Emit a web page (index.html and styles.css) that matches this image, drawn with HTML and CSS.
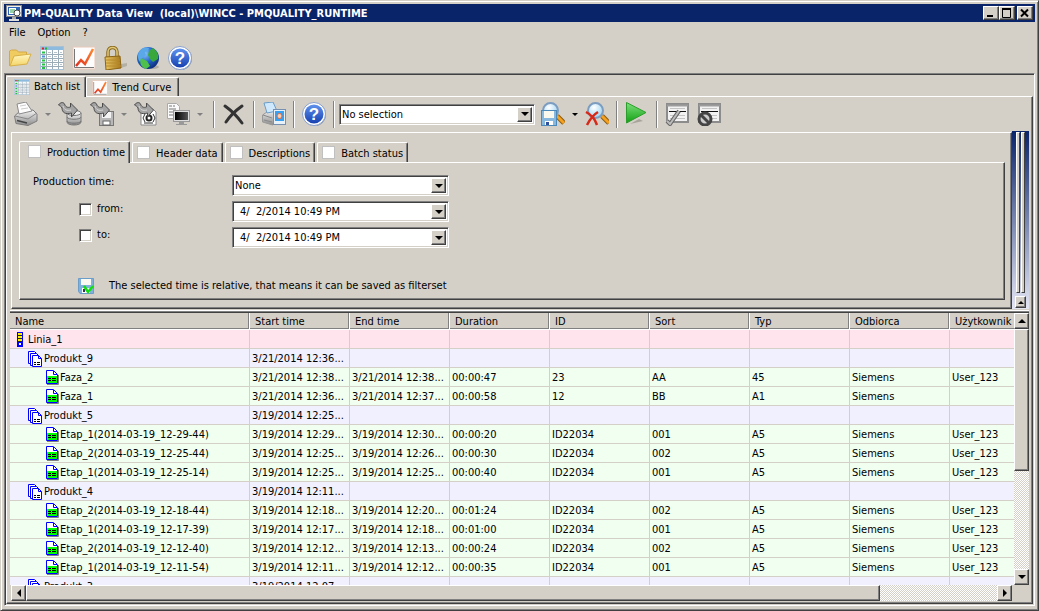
FILE: index.html
```
<!DOCTYPE html>
<html lang="en">
<head>
  <meta charset="UTF-8" />
  <meta name="viewport" content="width=device-width, initial-scale=1.0"/>
  <title>PM-QUALITY Data View</title>
  <link rel="stylesheet" href="styles.css">
</head>
<body>

<!-- shared icons -->
<svg class="defs" aria-hidden="true">
  <defs>
    <linearGradient id="gBlue" x1="0" y1="0" x2="0" y2="1"><stop offset="0" stop-color="#5f93ee"/><stop offset="1" stop-color="#1740b0"/></linearGradient>
    <linearGradient id="gFolder" x1="0" y1="0" x2="0" y2="1"><stop offset="0" stop-color="#fff6c0"/><stop offset="1" stop-color="#f3d468"/></linearGradient>
    <linearGradient id="gGold" x1="0" y1="0" x2="1" y2="0"><stop offset="0" stop-color="#e9c766"/><stop offset="1" stop-color="#a67719"/></linearGradient>
    <linearGradient id="gGrey" x1="0" y1="0" x2="0" y2="1"><stop offset="0" stop-color="#f4f4f4"/><stop offset="1" stop-color="#8c8c8c"/></linearGradient>
    <linearGradient id="gGreen" x1="0" y1="0" x2="0" y2="1"><stop offset="0" stop-color="#7be07b"/><stop offset="1" stop-color="#12a012"/></linearGradient>
    <linearGradient id="gScreen" x1="0" y1="0" x2="1" y2="0"><stop offset="0" stop-color="#000"/><stop offset="1" stop-color="#555"/></linearGradient>
    <linearGradient id="gCurve" x1="0" y1="1" x2="1" y2="0"><stop offset="0" stop-color="#e03020"/><stop offset="1" stop-color="#ff8a30"/></linearGradient>
    <radialGradient id="gGlobe" cx="0.35" cy="0.3" r="0.8"><stop offset="0" stop-color="#8cc8ff"/><stop offset="0.5" stop-color="#2464c8"/><stop offset="1" stop-color="#0a2470"/></radialGradient>
    <radialGradient id="gLens" cx="0.4" cy="0.3" r="0.8"><stop offset="0" stop-color="#fff"/><stop offset="1" stop-color="#8ccdf2"/></radialGradient>
  </defs>

  <symbol id="grid" viewBox="0 0 24 24">
    <rect x="0.5" y="0.5" width="23" height="23" fill="#fff" stroke="#a8c0d4"/>
    <rect x="1" y="1" width="22" height="3" fill="#8dbbe0"/>
    <path d="M2 2.500h2" stroke="#e02020" stroke-width="2"/><path d="M5 2.500h2" stroke="#28b028" stroke-width="2"/>
    <path d="M1 8.500h22M1 12.500h22M1 16.500h22M1 20.500h22M6.500 4v19M12.500 4v19M18.500 4v19" stroke="#9aabb8"/>
    <path d="M2 6.500h3M2 14.500h3M2 18.500h3M2 22h3" stroke="#25c045" stroke-width="2"/>
    <path d="M2 10.500h3" stroke="#4a90d0" stroke-width="2"/>
    <path d="M8 6.500h3M14 6.500h3M20 6.500h2M8 10.500h3M14 10.500h3M20 10.500h2M8 14.500h3M14 14.500h3M20 14.500h2M8 18.500h3M14 18.500h3M20 18.500h2" stroke="#b8c4cc"/>
  </symbol>

  <symbol id="curve" viewBox="0 0 24 24">
    <rect x="1" y="1" width="22" height="22" fill="#fdfdfd" stroke="#e8c8b8"/>
    <path d="M2.500 3v18.500H22" fill="none" stroke="#777"/>
    <path d="M4 20l5-6 4 4L21 3" fill="none" stroke="url(#gCurve)" stroke-width="2.500"/>
  </symbol>

  <symbol id="help" viewBox="0 0 24 24">
    <circle cx="12.500" cy="12.500" r="11.500" fill="#8090a8"/>
    <circle cx="12" cy="12" r="11.500" fill="#fff" stroke="#8aa0cc"/>
    <circle cx="12" cy="12" r="9.500" fill="url(#gBlue)"/>
    <text x="12" y="18" class="help-mark">?</text>
  </symbol>

  <symbol id="import" viewBox="0 0 24 24">
    <path d="M0.500 3c2-3 5-3 6-1 1 3 3 4 6 3V1l7 7-6 7v-4C7 13 4 10 4 6c-1-2-2-2-3.500-3z" fill="#a4a4a4" stroke="#4c4c4c"/>
    <path d="M5 4c1 4 4 5 8 4" fill="none" stroke="#d8d8d8"/>
  </symbol>

  <symbol id="printer" viewBox="0 0 24 24">
    <path d="M0.500 14L6 9l13-1 4 4v7l-9 4.500-12-2z" fill="url(#gGrey)" stroke="#7c7c7c"/>
    <path d="M5 12L3 2l9-2 6 9z" fill="#fdfdfd" stroke="#8a8a8a"/>
    <path d="M6 4l6-1M7 7l7-1" stroke="#ccc"/>
    <path d="M1 14l13 3 9-6" fill="none" stroke="#888"/>
    <path d="M3 18.500l10 2.500" stroke="#444" stroke-width="1.500"/>
  </symbol>

  <symbol id="lens" viewBox="0 0 24 24">
    <path d="M16 14l7 7" stroke="#8a5a10" stroke-width="5"/>
    <path d="M16 14l7 7" stroke="#f4a020" stroke-width="3"/>
    <circle cx="9.500" cy="8.500" r="7.500" fill="url(#gLens)" stroke="#7c9cc0" stroke-width="2"/>
  </symbol>

  <symbol id="window" viewBox="0 0 24 24">
    <rect x="2" y="2" width="21" height="18" fill="#f2f2f2" stroke="#8c8c8c" stroke-width="2"/>
    <path d="M2 3.500h21" stroke="#9c9c9c" stroke-width="2"/>
    <path d="M5 6.500h15M5 13.500h15M5 16.500h15" stroke="#c4c4c4"/>
    <path d="M4 9.500h17" stroke="#111"/>
  </symbol>

  <symbol id="line" viewBox="0 0 6 15">
    <rect x="0.500" y="0.500" width="5" height="14" fill="#fff200" stroke="#00f"/>
    <path d="M1 3.500h4M1 6.500h4M1 9.500h4" stroke="#222"/>
    <rect x="0" y="10" width="6" height="5" fill="#00f"/><rect x="2" y="11" width="2" height="2" fill="#fff"/>
  </symbol>

  <symbol id="batch" viewBox="0 0 15 16">
    <path d="M0.500 0.500h6l3 3v9h-9z" fill="#fff" stroke="#00f"/>
    <path d="M2.500 2.500h6l3 3v9h-9z" fill="#fff" stroke="#00f"/>
    <path d="M4.500 4.500h6l3 3v8h-9z" fill="#fff" stroke="#00f"/>
    <path d="M10.500 4.500v3h3" fill="none" stroke="#00f"/>
    <path d="M6 11.500h2M9 11.500h3M6 13.500h2M9 13.500h3" stroke="#000"/>
  </symbol>

  <symbol id="phase" viewBox="0 0 13 15">
    <path d="M12.500 5v9.500H1" fill="none" stroke="#808080"/>
    <path d="M0.500 0.500h7l4 4v9h-11z" fill="#fff" stroke="#00f"/>
    <rect x="1" y="6" width="10" height="7" fill="#0f0"/>
    <path d="M7.500 1v3.500H11" fill="none" stroke="#00f"/>
    <path d="M2 8.500h3M6 8.500h4M2 10.500h3M6 10.500h4" stroke="#000"/>
  </symbol>
</svg>

<div class="window">
  <header class="titlebar">
    <svg class="app-icon" viewBox="0 0 16 16">
      <rect x="0.500" y="0.500" width="15" height="11" fill="#eee" stroke="#888"/>
      <rect x="2" y="2" width="12" height="8" fill="#2c62b8"/>
      <rect x="3" y="3" width="7" height="6" fill="#fff"/>
      <path d="M4 5h5M4 7h5" stroke="#30a050"/>
      <circle cx="11" cy="8" r="3" fill="#fff" stroke="#444"/>
      <path d="M6 12h4v2H6z" fill="#aaa"/><path d="M3 15h10" stroke="#ddd" stroke-width="2"/>
    </svg>
    <h1>PM-QUALITY Data View&nbsp; (local)\WINCC - PMQUALITY_RUNTIME</h1>
    <div class="window-buttons">
      <button aria-label="Minimize"><svg viewBox="0 0 12 10"><path d="M2 8h6" stroke="#000" stroke-width="2"/></svg></button>
      <button aria-label="Maximize"><svg viewBox="0 0 12 10"><path d="M1.500 1v8.500h8V1M1 1h9" fill="none" stroke="#000"/><path d="M1 1h9" stroke="#000" stroke-width="2"/></svg></button>
      <button aria-label="Close" class="close"><svg viewBox="0 0 12 10"><path d="M2 1.500l7 7M9 1.500l-7 7" stroke="#000" stroke-width="2"/></svg></button>
    </div>
  </header>

  <nav class="menu">
    <a href="#">File</a>
    <a href="#">Option</a>
    <a href="#">?</a>
  </nav>

  <div class="main-toolbar">
    <button aria-label="Open">
      <svg viewBox="0 0 24 24">
        <path d="M1.500 20V5l2-1h5l2 2h8v4" fill="#f0cc60" stroke="#d4a848"/>
        <path d="M2 20l4-10 17-2-4 10z" fill="url(#gFolder)" stroke="#d8b048"/>
      </svg>
    </button>
    <button aria-label="Batch list"><svg><use href="#grid"/></svg></button>
    <button aria-label="Trend curve"><svg><use href="#curve"/></svg></button>
    <button aria-label="Lock">
      <svg viewBox="0 0 24 24">
        <path d="M14 23l9-3v-3l-6 1z" fill="#b5b0a4"/>
        <path d="M4 12V6c0-6 9-6 9 0v5" fill="none" stroke="#8a6a20" stroke-width="3.500"/>
        <path d="M4 12V6c0-6 9-6 9 0v5" fill="none" stroke="#e0c878" stroke-width="1.500"/>
        <path d="M1 11l15-1 1 12-15 2z" fill="url(#gGold)" stroke="#8c6414"/>
        <path d="M2 14h14M2 17h14M2 20h15" stroke="#b88a2c"/>
      </svg>
    </button>
    <button aria-label="Language">
      <svg viewBox="0 0 24 24">
        <ellipse cx="15" cy="21" rx="8" ry="2" fill="#b0aca2"/>
        <circle cx="12" cy="12" r="11" fill="url(#gGlobe)"/>
        <path d="M3 6c3-5 8-5 10-4l-1 3-3 1 1 3-4 3-2 4c-3-4-2-7-1-10z" fill="#5aa8e8"/>
        <path d="M13 5l4-3c4 3 6 7 5 11l-5 3-3-3-2-4z" fill="#38a83c"/>
        <path d="M5 12l6 3 3 5-4 3c-5-2-7-6-5-11z" fill="#50c04c"/>
      </svg>
    </button>
    <button aria-label="Help"><svg><use href="#help"/></svg></button>
  </div>

  <main class="workspace">
    <div class="view-tabs">
      <button class="view-tab active"><svg><use href="#grid"/></svg>Batch list</button>
      <button class="view-tab"><svg><use href="#curve"/></svg>Trend Curve</button>
    </div>

    <div class="view">
      <div class="batch-toolbar">
        <button aria-label="Print"><svg><use href="#printer"/></svg></button>
        <button class="drop off" aria-label="Print options"></button>
        <button aria-label="Import from database">
          <svg viewBox="0 0 24 24">
            <path d="M9 11v9c0 4 14 4 14 0v-9" fill="url(#gGrey)" stroke="#777"/>
            <ellipse cx="16" cy="11" rx="7" ry="2.500" fill="#eee" stroke="#777"/>
            <path d="M9 15c0 3 14 3 14 0M9 19c0 3 14 3 14 0" fill="none" stroke="#777"/>
            <use href="#import" width="24" height="24"/>
          </svg>
        </button>
        <button aria-label="Import from file">
          <svg viewBox="0 0 24 24">
            <rect x="9.500" y="9.500" width="14" height="14" fill="#b8b8b8" stroke="#777"/>
            <rect x="12" y="10" width="9" height="6" fill="#f4f4f4"/><rect x="13" y="19" width="7" height="4" fill="#fff" stroke="#666"/>
            <use href="#import" width="24" height="24"/>
          </svg>
        </button>
        <button class="drop off" aria-label="Import options"></button>
        <button aria-label="Import XML">
          <svg viewBox="0 0 24 24">
            <path d="M7 7h12l3 3v13H7z" fill="#fff" stroke="#888"/>
            <circle cx="15" cy="16" r="2.500" fill="none" stroke="#222" stroke-width="2"/>
            <path d="M11 12l-2 4 2 4M19 12l2 4-2 4M10 21h9" fill="none" stroke="#333"/>
            <use href="#import" width="24" height="24"/>
          </svg>
        </button>
        <button aria-label="Export to screen">
          <svg viewBox="0 0 24 24">
            <path d="M1.500 1.500h9l3 3v12h-12z" fill="#fafafa" stroke="#aaa"/>
            <path d="M3 4h3M7 4h2M3 7h7M3 10h4M3 13h4" stroke="#777"/>
            <rect x="7.500" y="8.500" width="16" height="11" fill="#ddd" stroke="#999"/>
            <rect x="9" y="10" width="13" height="8" fill="url(#gScreen)"/>
            <path d="M13 20h5v2h3v1H10v-1h3z" fill="#999"/>
          </svg>
        </button>
        <button class="drop off" aria-label="Export options"></button>
        <span class="sep"></span>
        <button aria-label="Delete">
          <svg viewBox="0 0 24 24"><path d="M3 4c7 5 12 10 17 17M20 4C13 9 8 14 4 20" fill="none" stroke="#333" stroke-width="3" stroke-linecap="round"/></svg>
        </button>
        <span class="sep"></span>
        <button aria-label="Print preview">
          <svg viewBox="0 0 24 24">
            <path d="M0.500 13l6-4 12-1v11l-8 4-10-3z" fill="url(#gGrey)" stroke="#999"/>
            <path d="M5 11L2 1l9-1 4 9z" fill="#cfe8fb" stroke="#6a9cc8"/>
            <path d="M1 13l9 3M2 18l8 2" stroke="#888"/>
            <rect x="11.500" y="7.500" width="12" height="15" fill="#e8f0f8" stroke="#7890b0"/>
            <rect x="13" y="9" width="9" height="10" fill="#38a0f0"/><circle cx="17.500" cy="14" r="2.500" fill="#ffd0b0" stroke="#f06030"/>
          </svg>
        </button>
        <span class="sep"></span>
        <button aria-label="Help"><svg><use href="#help"/></svg></button>
        <span class="sep"></span>
        <div class="combo filter-combo">
          <select aria-label="Filter set"><option>No selection</option></select>
          <span class="combo-arrow"></span>
        </div>
        <button aria-label="Save filter">
          <svg viewBox="0 0 24 24">
            <use href="#lens" width="24" height="24"/>
            <rect x="0.500" y="8.500" width="15" height="15" fill="#88b8de" stroke="#4c88b8"/>
            <rect x="3" y="9" width="10" height="7" fill="#fbf8ee"/><rect x="4" y="19" width="8" height="4" fill="#fff"/><rect x="5" y="20" width="3" height="3" fill="#30509c"/>
          </svg>
        </button>
        <button class="drop" aria-label="Filter options"></button>
        <button aria-label="Delete filter">
          <svg viewBox="0 0 24 24">
            <use href="#lens" x="1" width="24" height="24"/>
            <path d="M1 10c6 3 9 7 11 13M13 10c-5 3-8 7-11 13" fill="none" stroke="#d82818" stroke-width="2.500"/>
          </svg>
        </button>
        <span class="sep"></span>
        <button aria-label="Run">
          <svg viewBox="0 0 24 24">
            <path d="M5 22l13-3-4-2z" fill="#a8a49a"/>
            <path d="M1.500 0.500L21 10.500 1.500 21z" fill="url(#gGreen)" stroke="#2c9c2c"/>
          </svg>
        </button>
        <span class="sep"></span>
        <button aria-label="Edit list">
          <svg viewBox="0 0 24 24">
            <use href="#window" width="24" height="24"/>
            <path d="M2 19l3 3L14 9" fill="none" stroke="#666" stroke-width="4"/><path d="M2 19l3 3L14 9" fill="none" stroke="#bbb" stroke-width="2"/>
          </svg>
        </button>
        <button aria-label="Reset list">
          <svg viewBox="0 0 24 24">
            <use href="#window" width="24" height="24"/>
            <circle cx="8" cy="17" r="6" fill="#ccc" stroke="#444" stroke-width="3"/><path d="M4 13l8 8" stroke="#444" stroke-width="3"/>
          </svg>
        </button>
      </div>

      <section class="filter-row">
        <div class="filter">
          <div class="filter-tabs">
            <div class="filter-tab active"><input type="checkbox" aria-label="Use production time"><button>Production time</button></div>
            <div class="filter-tab"><input type="checkbox" aria-label="Use header data"><button>Header data</button></div>
            <div class="filter-tab"><input type="checkbox" aria-label="Use descriptions"><button>Descriptions</button></div>
            <div class="filter-tab"><input type="checkbox" aria-label="Use batch status"><button>Batch status</button></div>
          </div>
          <div class="filter-page">
            <div class="field">
              <label for="productionTime">Production time:</label>
              <div class="combo">
                <select id="productionTime"><option>None</option></select>
                <span class="combo-arrow"></span>
              </div>
            </div>
            <div class="field">
              <label class="check"><input type="checkbox">from:</label>
              <div class="combo">
                <input type="text" class="date" aria-label="From date" value="4/&nbsp; 2/2014 10:49 PM">
                <button class="combo-arrow" aria-label="Pick from date"></button>
              </div>
            </div>
            <div class="field">
              <label class="check"><input type="checkbox">to:</label>
              <div class="combo">
                <input type="text" class="date" aria-label="To date" value="4/&nbsp; 2/2014 10:49 PM">
                <button class="combo-arrow" aria-label="Pick to date"></button>
              </div>
            </div>
            <p class="hint">
              <svg viewBox="0 0 16 16">
                <path d="M0.500 0.500h15v15H2l-1.500-2z" fill="#80b0dc" stroke="#6c9cc8"/>
                <rect x="3" y="1" width="10" height="6" fill="#fbfaf2"/><rect x="4" y="10" width="8" height="5" fill="#fff"/><rect x="5" y="11" width="2" height="3" fill="#335"/>
                <path d="M6 8l4 6 5-6" fill="none" stroke="#10e010" stroke-width="2.500"/>
              </svg>
              The selected time is relative, that means it can be saved as filterset
            </p>
          </div>
        </div>
        <div class="collapse-bar">
          <div class="grip"><span></span><span></span></div>
          <button class="arrow-up" aria-label="Collapse filter"></button>
        </div>
      </section>

      <section class="list">
        <div class="list-body">
          <table>
            <colgroup><col class="name-col"><col span="8"></colgroup>
            <thead>
              <tr><th>Name</th><th>Start time</th><th>End time</th><th>Duration</th><th>ID</th><th>Sort</th><th>Typ</th><th>Odbiorca</th><th>Użytkownik</th></tr>
            </thead>
            <tbody id="batchRows"></tbody>
          </table>
        </div>
        <div class="scroll-v">
          <button class="arrow-up" aria-label="Scroll up"></button>
          <div class="track"><div class="thumb"></div></div>
          <button class="arrow-down" aria-label="Scroll down"></button>
        </div>
        <div class="scroll-h">
          <button class="arrow-left" aria-label="Scroll left"></button>
          <div class="track"><div class="thumb"></div></div>
          <button class="arrow-right" aria-label="Scroll right"></button>
        </div>
      </section>
    </div>
  </main>
</div>

<script>
  // kind, name, start, end, duration, id, sort, typ, odbiorca, user
  const rows = [
    ["line", "Linia_1"],
    ["batch", "Produkt_9", "3/21/2014 12:36..."],
    ["phase", "Faza_2", "3/21/2014 12:38...", "3/21/2014 12:38...", "00:00:47", "23", "AA", "45", "Siemens", "User_123"],
    ["phase", "Faza_1", "3/21/2014 12:36...", "3/21/2014 12:37...", "00:00:58", "12", "BB", "A1", "Siemens", ""],
    ["batch", "Produkt_5", "3/19/2014 12:25..."],
    ["phase", "Etap_1(2014-03-19_12-29-44)", "3/19/2014 12:29...", "3/19/2014 12:30...", "00:00:20", "ID22034", "001", "A5", "Siemens", "User_123"],
    ["phase", "Etap_2(2014-03-19_12-25-44)", "3/19/2014 12:25...", "3/19/2014 12:26...", "00:00:30", "ID22034", "002", "A5", "Siemens", "User_123"],
    ["phase", "Etap_1(2014-03-19_12-25-14)", "3/19/2014 12:25...", "3/19/2014 12:25...", "00:00:40", "ID22034", "001", "A5", "Siemens", "User_123"],
    ["batch", "Produkt_4", "3/19/2014 12:11..."],
    ["phase", "Etap_2(2014-03-19_12-18-44)", "3/19/2014 12:18...", "3/19/2014 12:20...", "00:01:24", "ID22034", "002", "A5", "Siemens", "User_123"],
    ["phase", "Etap_1(2014-03-19_12-17-39)", "3/19/2014 12:17...", "3/19/2014 12:18...", "00:01:00", "ID22034", "001", "A5", "Siemens", "User_123"],
    ["phase", "Etap_2(2014-03-19_12-12-40)", "3/19/2014 12:12...", "3/19/2014 12:13...", "00:00:24", "ID22034", "002", "A5", "Siemens", "User_123"],
    ["phase", "Etap_1(2014-03-19_12-11-54)", "3/19/2014 12:11...", "3/19/2014 12:12...", "00:00:35", "ID22034", "001", "A5", "Siemens", "User_123"],
    ["batch", "Produkt_3", "3/19/2014 12:07..."]
  ];

  const body = document.getElementById("batchRows");
  rows.forEach(([kind, name, ...cells]) => {
    const tr = document.createElement("tr");
    tr.className = kind;
    let html = `<td><div class="node"><svg><use href="#${kind}"/></svg>${name}</div></td>`;
    for (let i = 0; i < 8; i++) {
      html += `<td>${cells[i] || ""}</td>`;
    }
    tr.innerHTML = html;
    body.appendChild(tr);
  });
</script>

</body>
</html>
```
FILE: styles.css
```
* {
  box-sizing: border-box;
}

:root {
  --face: #d4d0c8;
  --grey: #808080;
  --dark: #404040;
  --navy: #0a246a;
}

body {
  margin: 0;
  background: var(--face);
  color: #000;
  font: 11px/14px "DejaVu Sans Condensed", "Noto Sans", sans-serif;
}

button, input, select {
  font: inherit;
  color: inherit;
  margin: 0;
  padding: 0;
  border: 0;
  border-radius: 0;
  background: none;
}

svg {
  display: block;
  flex: none;
}

.defs {
  position: absolute;
  width: 0;
  height: 0;
}

.help-mark {
  font: bold 17px "Liberation Sans", sans-serif;
  fill: #fff;
  text-anchor: middle;
}

.window {
  display: flex;
  flex-direction: column;
  height: 100vh;
  padding: 3px 3px 4px;
  border: 1px solid;
  border-color: var(--face) var(--dark) var(--dark) var(--face);
  box-shadow: inset 1px 1px #fff, inset -1px -1px var(--grey);
}

/* title bar */
.titlebar {
  display: flex;
  align-items: center;
  height: 18px;
  flex: none;
  padding: 0 2px;
  gap: 2px;
  background: var(--navy);
  color: #fff;
}

.app-icon {
  width: 16px;
  height: 16px;
}

.titlebar h1 {
  flex: 1;
  margin: 0;
  padding-top: 1px;
  font-size: 11px;
  font-weight: bold;
  white-space: nowrap;
}

.window-buttons {
  display: flex;
}

.window-buttons button,
.combo-arrow,
.arrow-up, .arrow-down, .arrow-left, .arrow-right,
.thumb {
  background: var(--face);
  border: 1px solid;
  border-color: #fff var(--dark) var(--dark) #fff;
  box-shadow: inset -1px -1px var(--grey);
}

.window-buttons button {
  width: 16px;
  height: 14px;
  padding: 1px;
}

.window-buttons svg {
  width: 12px;
  height: 10px;
}

.window-buttons .close {
  margin-left: 2px;
}

/* menu and main toolbar */
.menu {
  display: flex;
  flex: none;
  gap: 12px;
  padding: 4px 5px 2px;
}

.menu a {
  color: inherit;
  text-decoration: none;
}

.main-toolbar {
  display: flex;
  flex: none;
  gap: 8px;
  padding: 4px 4px 3px;
}

.main-toolbar svg,
.batch-toolbar svg {
  width: 24px;
  height: 24px;
}

/* workspace */
.workspace {
  display: flex;
  flex-direction: column;
  flex: 1;
  min-height: 0;
  padding: 1px 1px 1px 0;
  border: 1px solid;
  border-color: var(--grey) #fff #fff var(--grey);
  box-shadow: inset 1px 1px var(--dark);
}

.view-tabs {
  display: flex;
  align-items: flex-end;
  flex: none;
  padding: 1px 0 0 1px;
}

.view-tab {
  display: flex;
  align-items: center;
  gap: 4px;
  height: 19px;
  padding: 1px 7px 0 5px;
  border: 1px solid;
  border-color: #fff var(--dark) transparent #fff;
  border-bottom: 0;
  border-radius: 2px 2px 0 0;
  box-shadow: inset -1px 0 var(--grey);
}

.view-tab svg {
  width: 16px;
  height: 16px;
}

.view-tab.active {
  height: 21px;
  margin-bottom: -1px;
  padding: 0 5px 1px 7px;
  background: var(--face);
  position: relative;
}

.view {
  display: flex;
  flex-direction: column;
  flex: 1;
  min-height: 0;
  margin-left: 1px;
  padding: 0 3px 2px;
  border: 1px solid;
  border-color: #fff var(--dark) var(--dark) #fff;
  box-shadow: inset -1px -1px var(--grey);
}

.batch-toolbar {
  display: flex;
  align-items: center;
  flex: none;
  gap: 4px;
  height: 34px;
  padding: 0 4px;
}

.batch-toolbar button:not(.drop) + button:not(.drop) {
  margin-left: 4px;
}

.drop {
  width: 12px;
  height: 24px;
}

.drop::before {
  content: "";
  display: block;
  width: 0;
  margin: 0 auto;
  border: 3px solid transparent;
  border-top-color: #000;
  border-bottom: 0;
}

.drop.off::before {
  border-top-color: var(--grey);
}

.sep {
  width: 2px;
  height: 27px;
  margin: 0 3px;
  background: linear-gradient(90deg, var(--grey) 50%, #fff 50%);
}

/* combo boxes */
.combo {
  display: flex;
  height: 21px;
  background: #fff;
  border: 1px solid;
  border-color: var(--grey) #fff #fff var(--grey);
  box-shadow: inset 1px 1px var(--dark), inset -1px -1px var(--face);
  padding: 2px;
}

.combo select,
.combo .date {
  flex: 1;
  min-width: 0;
  appearance: none;
  outline: 0;
  padding-top: 1px;
}

.combo .date {
  padding: 0 0 0 5px;
}

.combo-arrow {
  display: flex;
  align-items: center;
  justify-content: center;
  width: 15px;
  flex: none;
}

.combo-arrow::before {
  content: "";
  border: 4px solid transparent;
  border-top-color: #000;
  border-bottom: 0;
}

.filter-combo {
  width: 196px;
  margin: 0 2px 0 -3px;
}

/* filter */
.filter-row {
  display: flex;
  flex: none;
  margin-left: 1px;
}

.filter {
  flex: 1;
  margin-top: 1px;
  padding: 8px 6px 8px 7px;
  border: 1px solid;
  border-color: #fff var(--dark) var(--dark) #fff;
  box-shadow: inset -1px -1px var(--grey);
}

.filter-tabs {
  display: flex;
  align-items: flex-end;
  gap: 2px;
}

.filter-tab {
  display: flex;
  align-items: center;
  gap: 6px;
  height: 20px;
  padding: 0 4px;
  border: 1px solid;
  border-color: #fff var(--dark) transparent #fff;
  border-bottom: 0;
  border-radius: 2px 2px 0 0;
  box-shadow: inset -1px 0 var(--grey);
}

.filter-tab button {
  padding-top: 2px;
}

.filter-tab.active {
  height: 22px;
  margin-bottom: -1px;
  padding: 0 4px 2px 8px;
  background: var(--face);
  position: relative;
}

.filter-tab input {
  appearance: none;
  width: 13px;
  height: 13px;
  background: #fff;
  border: 1px solid #c0c0c0;
}

.filter-page {
  height: 138px;
  padding: 12px 13px;
  border: 1px solid;
  border-color: #fff var(--dark) var(--dark) #fff;
  box-shadow: inset -1px -1px var(--grey);
}

.field {
  display: grid;
  grid-template-columns: 199px 217px;
  margin-bottom: 5px;
}

.check {
  display: flex;
  align-items: center;
  gap: 5px;
  height: 16px;
  padding-left: 46px;
}

.check input {
  appearance: none;
  width: 13px;
  height: 13px;
  background: #fff;
  border: 1px solid;
  border-color: var(--grey) #fff #fff var(--grey);
  box-shadow: inset 1px 1px var(--dark), inset -1px -1px var(--face);
}

.hint {
  display: flex;
  align-items: center;
  gap: 15px;
  margin: 30px 0 0 45px;
}

.hint svg {
  width: 16px;
  height: 16px;
}

/* collapse bar */
.collapse-bar {
  display: flex;
  flex-direction: column;
  align-items: center;
  width: 17px;
  gap: 3px;
  padding: 1px 0;
  background: linear-gradient(var(--navy), #e4e6f4);
}

.grip {
  display: flex;
  flex: 1;
  gap: 1px;
}

.grip span {
  width: 4px;
  background: var(--face);
  border: 1px solid;
  border-color: #fff var(--dark) var(--dark) #fff;
}

.collapse-bar button {
  width: 11px;
  height: 12px;
}

/* batch list */
.list {
  display: grid;
  grid-template-columns: minmax(0, 1fr) 15px;
  grid-template-rows: minmax(0, 1fr) 16px;
  flex: 1;
  min-height: 0;
  margin-top: 1px;
  border-top: 1px solid #fff;
  padding-top: 2px;
  box-shadow: inset 0 1px var(--grey), inset 0 2px var(--dark);
}

.list-body {
  overflow: hidden;
}

table {
  width: 1040px;
  table-layout: fixed;
  border-collapse: separate;
  border-spacing: 0;
}

.name-col {
  width: 240px;
}

th {
  height: 17px;
  padding: 1px 5px 0;
  background: var(--face);
  border: 1px solid;
  border-width: 0 1px 1px 0;
  border-color: #fff;
  box-shadow: inset -1px -1px var(--grey);
  font-weight: normal;
  text-align: left;
}

td {
  height: 19px;
  padding: 1px 2px 0;
  border: 1px solid var(--face);
  border-width: 0 1px 1px 0;
  line-height: 17px;
  white-space: nowrap;
}

.line td {
  background: #ffe4ee;
}

.batch td {
  background: #f0f0ff;
}

.phase td {
  background: #f0fff0;
}

.node {
  display: flex;
  align-items: flex-start;
  gap: 1px;
  height: 17px;
}

.node svg {
  margin-top: 1px;
}

.line .node {
  padding-left: 5px;
  gap: 5px;
}

.line svg {
  width: 6px;
  height: 15px;
}

.batch .node {
  padding-left: 16px;
}

.batch svg {
  width: 15px;
  height: 16px;
}

.phase .node {
  padding-left: 34px;
}

.phase svg {
  width: 13px;
  height: 15px;
}

/* scroll bars */
.scroll-v,
.scroll-h,
.track {
  display: flex;
}

.scroll-v,
.scroll-v .track {
  flex-direction: column;
}

.scroll-h {
  padding: 0 2px 0 1px;
}

.track {
  flex: 1;
  background: repeating-conic-gradient(#fff 0 25%, var(--face) 0 50%) 0 0 / 2px 2px;
}

.scroll-v .thumb {
  height: 59%;
}

.scroll-h .thumb {
  width: 88%;
}

.arrow-up, .arrow-down, .arrow-left, .arrow-right {
  display: flex;
  align-items: center;
  justify-content: center;
  flex: none;
  width: 15px;
  height: 16px;
}

.arrow-up::before, .arrow-down::before, .arrow-left::before, .arrow-right::before {
  content: "";
  border: 4px solid transparent;
}

.arrow-up::before {
  border-top: 0;
  border-bottom-color: #000;
}

.arrow-down::before {
  border-bottom: 0;
  border-top-color: #000;
}

.arrow-left::before {
  border-left: 0;
  border-right-color: #000;
}

.arrow-right::before {
  border-right: 0;
  border-left-color: #000;
}

.collapse-bar .arrow-up::before {
  border-width: 0 3px 3px;
}
```
